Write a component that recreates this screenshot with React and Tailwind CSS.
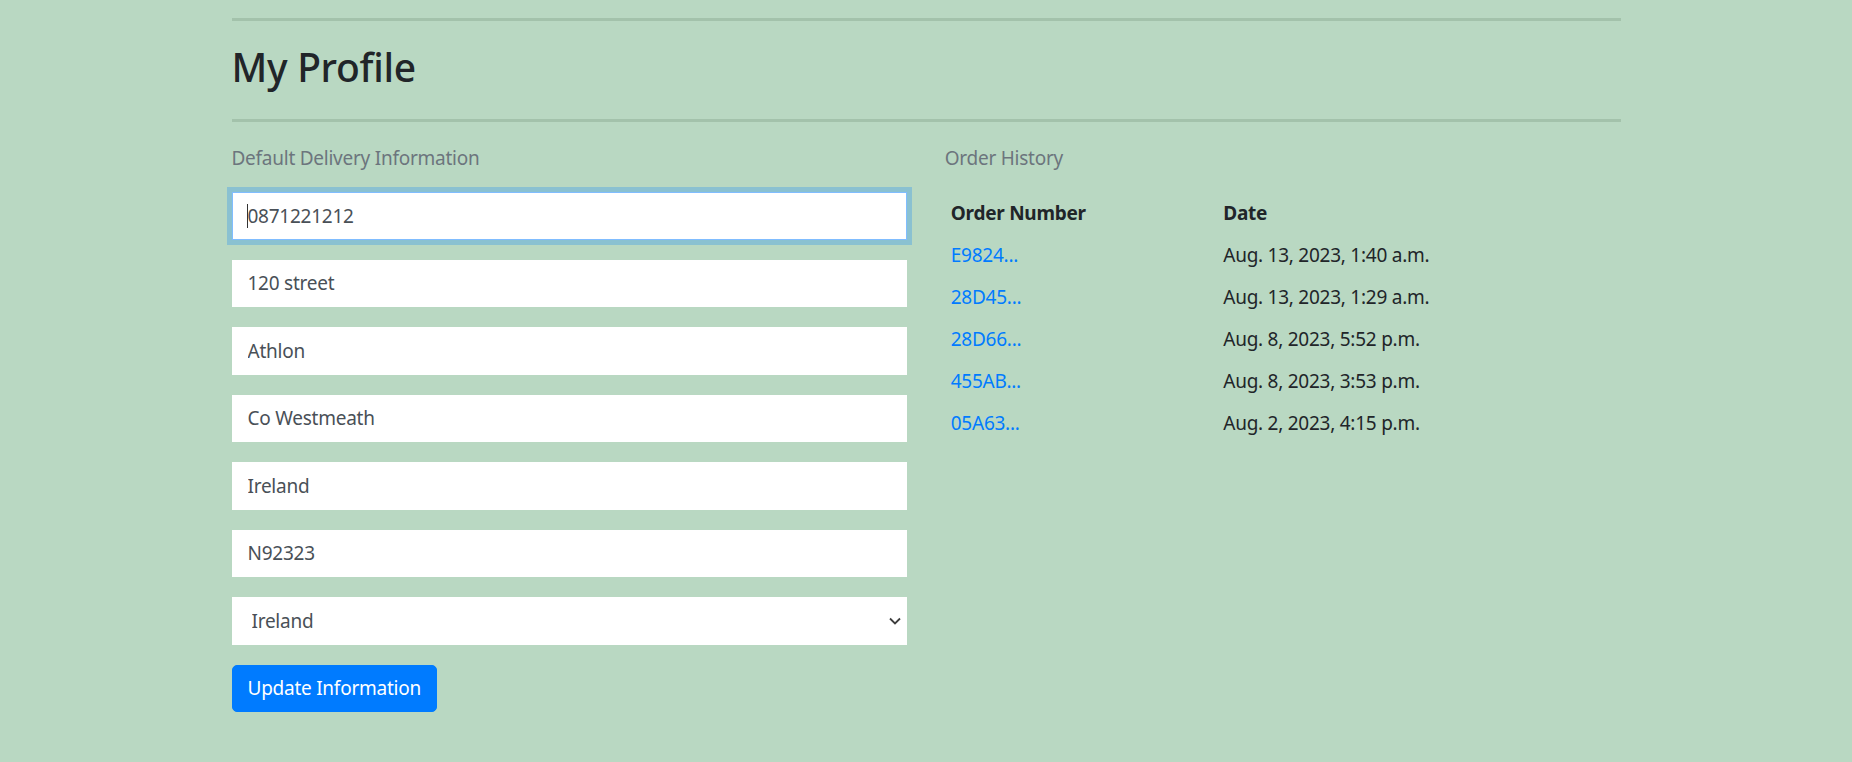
import React from 'react';

const orders = [
  { id: 'E9824...', date: 'Aug. 13, 2023, 1:40 a.m.' },
  { id: '28D45...', date: 'Aug. 13, 2023, 1:29 a.m.' },
  { id: '28D66...', date: 'Aug. 8, 2023, 5:52 p.m.' },
  { id: '455AB...', date: 'Aug. 8, 2023, 3:53 p.m.' },
  { id: '05A63...', date: 'Aug. 2, 2023, 4:15 p.m.' },
];

const fields = ['120 street', 'Athlon', 'Co Westmeath', 'Ireland', 'N92323'];

function Field({ value }) {
  return (
    <input
      type="text"
      defaultValue={value}
      className="block w-full h-[47.5px] mb-[20px] bg-white border border-white px-[15px] text-[19px] tracking-[-0.25px] leading-[30px] text-[#495057] outline-none"
    />
  );
}

export default function App() {
  return (
    <div className="min-h-screen bg-[#b9d8c2] font-['Noto_Sans',sans-serif] text-[#212529] text-[19px] tracking-[-0.25px]">
      <div className="w-[1389px] mx-auto pt-[18px]">
        <hr className="border-0 border-t-[3px] border-[#a3c2ab] mb-[22px]" />
        <h2 className="text-[39px] tracking-[-0.3px] leading-[48px] font-medium">My Profile</h2>
        <hr className="border-0 border-t-[3px] border-[#a3c2ab] mt-[28px] mb-[21px]" />

        <div className="grid grid-cols-2 gap-x-[37.5px]">
          <div>
            <p className="leading-[30px] text-[#6c757d] mb-[19px]">Default Delivery Information</p>
            <form onSubmit={(e) => e.preventDefault()}>
              <div className="relative mb-[20px]">
                <input
                  type="text"
                  defaultValue="0871221212"
                  className="block w-full h-[47.5px] bg-white border border-[#80bdff] shadow-[0_0_0_5px_rgba(0,123,255,0.25)] px-[15px] text-[19px] tracking-[-0.25px] leading-[30px] text-[#495057] outline-none"
                />
                <span className="absolute left-[15px] top-[12px] h-[24px] w-px bg-[#333]" />
              </div>
              {fields.map((v) => (
                <Field key={v} value={v} />
              ))}
              <div className="relative mb-[20px]">
                <select
                  defaultValue="IE"
                  className="block w-full h-[47.5px] appearance-none bg-white border border-white pl-[19px] pr-[30px] text-[19px] tracking-[-0.25px] leading-[30px] text-[#495057] outline-none"
                >
                  <option value="IE">Ireland</option>
                </select>
                <svg
                  className="absolute right-[6px] top-[20px] pointer-events-none"
                  width="12"
                  height="8"
                  viewBox="0 0 12 8"
                  fill="none"
                >
                  <path d="M1 1.5l5 5 5-5" stroke="#3d3d3d" strokeWidth="1.8" />
                </svg>
              </div>
              <button
                type="submit"
                className="h-[47.5px] px-[15px] rounded-[5px] bg-[#007bff] border border-[#007bff] text-white leading-[30px]"
              >
                Update Information
              </button>
            </form>
          </div>

          <div>
            <p className="leading-[30px] text-[#6c757d] mb-[19px]">Order History</p>
            <table className="w-full leading-[30px]">
              <thead>
                <tr>
                  <th className="w-[272.5px] p-[6px] text-left font-bold">Order Number</th>
                  <th className="p-[6px] text-left font-bold">Date</th>
                </tr>
              </thead>
              <tbody>
                {orders.map((o) => (
                  <tr key={o.id}>
                    <td className="p-[6px]">
                      <a href="#" className="text-[#007bff]">{o.id}</a>
                    </td>
                    <td className="p-[6px]">{o.date}</td>
                  </tr>
                ))}
              </tbody>
            </table>
          </div>
        </div>
      </div>
    </div>
  );
}
